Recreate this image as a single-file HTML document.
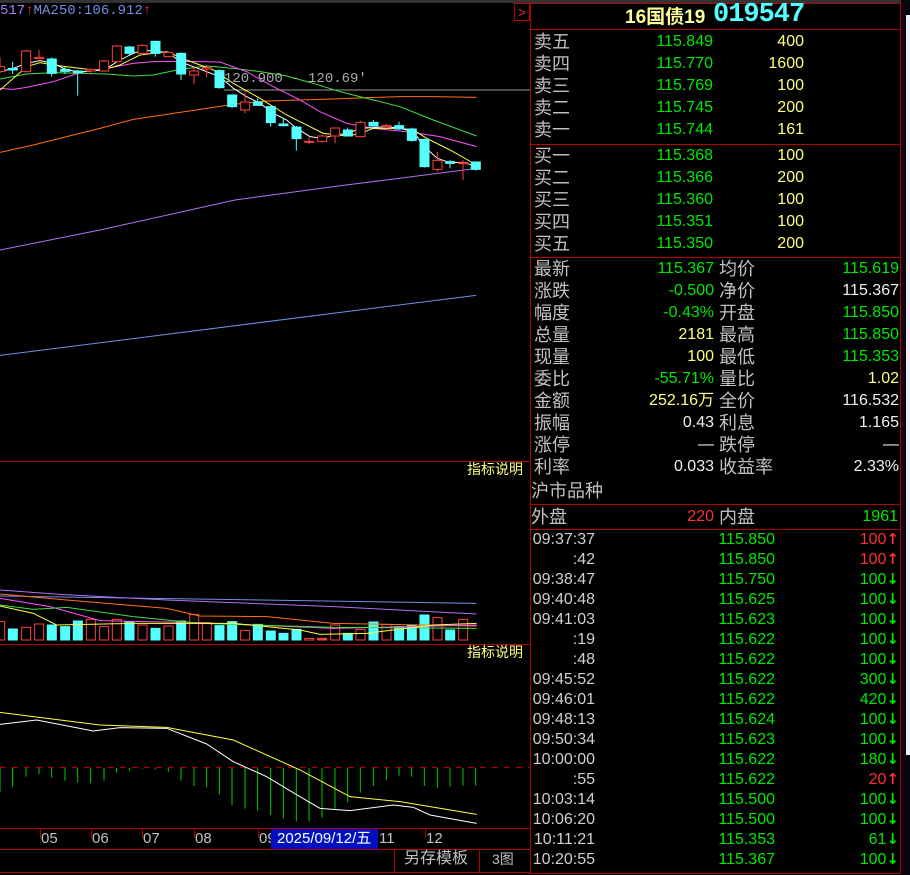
<!DOCTYPE html>
<html><head><meta charset="utf-8">
<style>
*{margin:0;padding:0;box-sizing:border-box}
body{width:910px;height:875px;background:#000;overflow:hidden;position:relative;font-family:"Liberation Sans","Noto Sans CJK SC",sans-serif}
.a{position:absolute;white-space:nowrap;line-height:1}
.lb{color:#c0c0c0;font-size:18px}
.g{color:#00e800;font-size:16px}
.y{color:#ffff80;font-size:16px}
.w{color:#f0f0f0;font-size:16px}
.r{color:#ff3030;font-size:16px}
.hl{position:absolute;height:1px;background:#b00000}
.vl{position:absolute;width:1px;background:#b00000}
b{font-family:"DejaVu Sans",sans-serif;font-size:15px;line-height:1}
</style></head><body>
<div style="position:absolute;left:0;top:0;width:910px;height:3px;background:#333"></div>
<div style="position:absolute;left:901px;top:0;width:9px;height:875px;background:#0a0410"></div>
<div style="position:absolute;left:906px;top:15px;width:4px;height:740px;background:#eef"></div>

<svg class="a" style="left:0;top:0" width="530" height="875">
<g transform="scale(0.33333)" fill="none" stroke-width="1">
<g>
<line x1="672" y1="270" x2="1590" y2="270" stroke="#999" vector-effect="non-scaling-stroke"/>
<polyline vector-effect="non-scaling-stroke" stroke="#6f8fe8" points="0,1066 1428,886"/>
<polyline vector-effect="non-scaling-stroke" stroke="#b070f0" points="0,750 300,690 705,600 1000,560 1430,505"/>
<polyline vector-effect="non-scaling-stroke" stroke="#ff7010" points="0,457 100,435 200,410 300,385 400,358 500,343 600,328 700,313 800,303 900,300 1000,297 1100,293 1200,290 1300,290 1430,292"/>
<polyline vector-effect="non-scaling-stroke" stroke="#40e040" points="0,237 80,222 160,218 240,220 320,222 400,228 460,225 540,208 620,198 700,205 780,215 860,228 940,250 1020,275 1100,295 1200,320 1300,360 1430,408"/>
<polyline vector-effect="non-scaling-stroke" stroke="#ff50ff" points="0,265 40,268 80,262 160,245 240,218 320,205 400,190 460,185 560,184 660,186 740,215 820,260 900,300 960,335 1040,370 1120,385 1200,393 1240,398 1320,410 1430,440"/>
<polyline vector-effect="non-scaling-stroke" stroke="#ffff40" points="0,270 40,235 80,200 120,188 160,195 240,205 300,212 360,195 420,165 500,155 560,180 640,210 700,250 780,295 860,345 930,380 970,400 1043,408 1081,400 1120,385 1200,385 1240,390 1280,415 1350,450 1430,495"/>
<polyline vector-effect="non-scaling-stroke" stroke="#fff" points="0,215 40,205 80,190 120,182 160,190 200,210 240,215 280,213 320,205 360,180 400,160 430,150 470,155 505,157 540,185 580,200 620,215 660,230 700,265 740,290 780,310 820,340 860,360 890,385 930,410 966,415 1005,405 1043,400 1081,385 1120,383 1160,380 1200,385 1240,395 1273,440 1312,475 1350,488 1389,487 1430,500"/>
</g>
<g id="cd"></g>
<g transform="translate(0,1710)" id="vol">
<polyline vector-effect="non-scaling-stroke" stroke="#6f8fe8" points="0,78 1430,100"/>
<polyline vector-effect="non-scaling-stroke" stroke="#b070f0" points="0,60 180,73 500,90 1000,110 1430,132"/>
<polyline vector-effect="non-scaling-stroke" stroke="#ff7010" points="0,72 200,90 500,115 600,138 800,140 1000,160 1430,168"/>
<polyline vector-effect="non-scaling-stroke" stroke="#ff50ff" points="0,85 150,110 300,152 600,158 1000,175 1430,165"/>
<polyline vector-effect="non-scaling-stroke" stroke="#40e040" points="0,105 100,118 200,112 400,140 600,160 1000,172 1430,175"/>
<polyline vector-effect="non-scaling-stroke" stroke="#ffff40" points="0,108 100,130 170,165 400,160 700,160 900,180 960,193 1100,190 1300,165 1430,160"/>
</g>
<g transform="translate(0,1710)">
<line x1="0" y1="592" x2="1590" y2="592" stroke="#c00000" stroke-dasharray="6,6" vector-effect="non-scaling-stroke"/>
<g id="macd"></g>
<polyline vector-effect="non-scaling-stroke" stroke="#ffff40" points="0,427 100,440 300,465 500,472 700,510 900,600 1050,680 1200,695 1430,733"/>
<polyline vector-effect="non-scaling-stroke" stroke="#fff" points="0,463 110,450 280,483 360,473 500,475 620,522 700,575 800,620 900,680 960,715 1050,722 1180,705 1240,712 1290,735 1430,760"/>
</g>
</g>
</svg>
<script>
var C=[[0,200,215,172,220,'r'],[38,205,210,185,222,'c'],[78,153,215,150,218,'r'],[117,172,176,150,176,'r'],[155,177,220,172,230,'c'],[195,208,214,200,222,'c'],[233,213,218,210,287,'c'],[272,208,213,205,218,'r'],[312,183,213,180,215,'r'],[350,138,185,135,188,'r'],[388,141,160,138,165,'c'],[427,136,160,133,165,'r'],[466,124,160,122,170,'c'],[505,157,170,155,172,'r'],[543,160,222,157,240,'c'],[582,213,225,200,253,'r'],[620,203,207,195,232,'r'],[658,212,263,208,266,'c'],[696,285,320,283,325,'c'],[735,306,330,272,340,'r'],[773,306,316,295,318,'c'],[812,320,368,318,380,'c'],[850,372,377,355,380,'c'],[889,381,416,378,452,'c'],[927,424,427,412,432,'r'],[966,408,424,405,428,'r'],[1005,384,408,382,430,'r'],[1043,390,408,383,410,'c'],[1081,367,410,362,412,'r'],[1120,367,378,360,380,'c'],[1159,376,380,372,382,'r'],[1197,377,387,365,390,'c'],[1235,387,421,383,425,'c'],[1273,418,500,416,503,'c'],[1312,481,508,456,515,'r'],[1350,485,490,480,505,'c'],[1389,488,491,480,540,'r'],[1427,486,508,484,512,'c']];
var V=[155,177,172,162,165,170,153,148,170,148,155,165,175,168,153,133,158,167,155,181,163,183,190,178,205,205,165,190,178,156,163,170,165,135,143,180,148,210];
var M=[665,650,620,612,623,632,638,640,632,608,602,596,598,605,632,648,652,673,706,716,722,735,745,754,754,743,716,697,668,648,630,617,620,648,653,650,647,647];
var ns='http://www.w3.org/2000/svg';
function el(t,a){var e=document.createElementNS(ns,t);for(var k in a)e.setAttribute(k,a[k]);e.setAttribute('vector-effect','non-scaling-stroke');return e;}
var cd=document.getElementById('cd'),vol=document.getElementById('vol'),mc=document.getElementById('macd');
C.forEach(function(c,i){var col=c[5]=='r'?'#ff4040':'#54ffff';
cd.appendChild(el('line',{x1:c[0],x2:c[0],y1:c[3],y2:c[4],stroke:col}));
var h=Math.max(c[2]-c[1],3);
cd.appendChild(el('rect',{x:c[0]-13,y:c[1],width:27,height:h,fill:c[5]=='r'?'#000':col,stroke:col}));
var vt=V[i],vc=(i==25)?'#ff4040':col;
vol.insertBefore(el('rect',{x:c[0]-13,y:vt,width:27,height:210-vt,fill:(c[5]=='r'&&i!=25)?'none':vc,stroke:vc}),vol.firstChild);
mc.appendChild(el('line',{x1:c[0],x2:c[0],y1:594,y2:M[i],stroke:'#00d000'}));
});
</script>

<div class="a" style="left:0;top:4px;font-family:'Liberation Mono',monospace;font-size:14px;color:#a080ff">517<span style="color:#ff3030">↑</span><span style="color:#7090e0">MA250:106.912</span><span style="color:#ff3030">↑</span></div>
<div style="position:absolute;left:514px;top:3px;width:16px;height:18px;border:1px solid #c00000;color:#e03030;font-size:14px;text-align:center;line-height:16px">&gt;</div>
<div class="a" style="left:224px;top:72px;font-family:'Liberation Mono',monospace;font-size:14px;color:#aaa">120.900 - 120.69'</div>

<div class="hl" style="left:0;top:461px;width:530px"></div>
<div class="a" style="left:467px;top:462px;font-size:14px;color:#ffff80">指标说明</div>
<div class="hl" style="left:0;top:644px;width:530px"></div>
<div class="a" style="left:467px;top:645px;font-size:14px;color:#ffff80">指标说明</div>
<div class="hl" style="left:0;top:828px;width:530px"></div>
<div class="hl" style="left:0;top:849px;width:530px"></div>
<div class="hl" style="left:0;top:872px;width:530px"></div>
<div class="vl" style="left:40px;top:828px;height:10px"></div>
<div class="vl" style="left:91px;top:828px;height:10px"></div>
<div class="vl" style="left:142px;top:828px;height:10px"></div>
<div class="vl" style="left:194px;top:828px;height:10px"></div>
<div class="vl" style="left:258px;top:828px;height:10px"></div>
<div class="vl" style="left:425px;top:828px;height:10px"></div>
<div class="a" style="top:831px;left:41px;color:#c0c0c0;font-size:15px">05</div>
<div class="a" style="top:831px;left:92px;color:#c0c0c0;font-size:15px">06</div>
<div class="a" style="top:831px;left:143px;color:#c0c0c0;font-size:15px">07</div>
<div class="a" style="top:831px;left:195px;color:#c0c0c0;font-size:15px">08</div>
<div class="a" style="top:831px;left:259px;color:#c0c0c0;font-size:15px">09</div>
<div class="a" style="top:831px;left:379px;color:#c0c0c0;font-size:15px">11</div>
<div class="a" style="top:831px;left:426px;color:#c0c0c0;font-size:15px">12</div>
<div class="a" style="left:271px;top:829px;width:107px;height:20px;background:#0010c0;color:#fff;font-size:15px;padding:2px 0 0 6px">2025/09/12/五</div>
<div class="vl" style="left:394px;top:849px;height:24px"></div>
<div class="vl" style="left:479px;top:849px;height:24px"></div>
<div class="a" style="left:404px;top:851px;color:#c0c0c0;font-size:16px">另存模板</div>
<div class="a" style="left:492px;top:852px;color:#c0c0c0;font-size:14px">3图</div>

<div class="vl" style="left:530px;top:3px;height:870px"></div>
<div class="vl" style="left:900px;top:3px;height:870px"></div>
<div class="hl" style="left:530px;top:3px;width:371px"></div>
<div class="hl" style="left:530px;top:29px;width:371px"></div>
<div class="hl" style="left:530px;top:144px;width:371px"></div>
<div class="hl" style="left:530px;top:257px;width:371px"></div>
<div class="hl" style="left:530px;top:504px;width:371px"></div>
<div class="hl" style="left:530px;top:529px;width:371px"></div>
<div class="hl" style="left:530px;top:873px;width:371px"></div>

<div class="a" style="left:625px;top:8px;color:#ffff99;font-size:19px;font-weight:bold">16国债19</div>
<div class="a" style="left:713px;top:2px;color:#54ffff;font-size:27px;font-weight:bold;font-family:'Liberation Mono',monospace;letter-spacing:-1px">019547</div>

<div id="rp"></div>
<script>
var h='';
function t(x,y,c,txt,right){h+='<div class="a '+c+'" style="'+(right?'right:'+(910-x):'left:'+x)+'px;top:'+y+'px">'+txt+'</div>';}
var sell=[['卖五','115.849','400'],['卖四','115.770','1600'],['卖三','115.769','100'],['卖二','115.745','200'],['卖一','115.744','161']];
var buy=[['买一','115.368','100'],['买二','115.366','200'],['买三','115.360','100'],['买四','115.351','100'],['买五','115.350','200']];
sell.forEach(function(r,i){var y=33+i*22;t(534,y,'lb',r[0]);t(713,y+1,'g',r[1],1);t(804,y+1,'y',r[2],1);});
buy.forEach(function(r,i){var y=147+i*22;t(534,y,'lb',r[0]);t(713,y+1,'g',r[1],1);t(804,y+1,'y',r[2],1);});
var st=[['最新','115.367','g','均价','115.619','g'],['涨跌','-0.500','g','净价','115.367','w'],['幅度','-0.43%','g','开盘','115.850','g'],['总量','2181','y','最高','115.850','g'],['现量','100','y','最低','115.353','g'],['委比','-55.71%','g','量比','1.02','y'],['金额','252.16万','y','全价','116.532','w'],['振幅','0.43','w','利息','1.165','w'],['涨停','—','w','跌停','—','w'],['利率','0.033','w','收益率','2.33%','w']];
st.forEach(function(r,i){var y=260+i*22;t(534,y,'lb',r[0]);t(714,y+1,r[2],r[1],1);t(719,y,'lb',r[3]);t(899,y+1,r[5],r[4],1);});
t(531,482,'lb','沪市品种');
t(531,508,'lb','外盘');t(714,509,'r','220',1);t(719,508,'lb','内盘');t(898,509,'g','1961',1);
var tk=[['09:37:37','115.850','100','↑','r'],[':42','115.850','100','↑','r'],['09:38:47','115.750','100','↓','g'],['09:40:48','115.625','100','↓','g'],['09:41:03','115.623','100','↓','g'],[':19','115.622','100','↓','g'],[':48','115.622','100','↓','g'],['09:45:52','115.622','300','↓','g'],['09:46:01','115.622','420','↓','g'],['09:48:13','115.624','100','↓','g'],['09:50:34','115.623','100','↓','g'],['10:00:00','115.622','180','↓','g'],[':55','115.622','20','↑','r'],['10:03:14','115.500','100','↓','g'],['10:06:20','115.500','100','↓','g'],['10:11:21','115.353','61','↓','g'],['10:20:55','115.367','100','↓','g']];
tk.forEach(function(r,i){var y=532+i*20;h+='<div class="a" style="right:'+(910-595)+'px;top:'+y+'px;color:#d0d0d0;font-size:16px">'+r[0]+'</div>';t(775,y,'g',r[1],1);h+='<div class="a '+r[4]+'" style="right:11px;top:'+y+'px;height:16px">'+r[2]+'<b>'+r[3]+'</b></div>';});
document.getElementById('rp').innerHTML=h;
</script>
</body></html>
